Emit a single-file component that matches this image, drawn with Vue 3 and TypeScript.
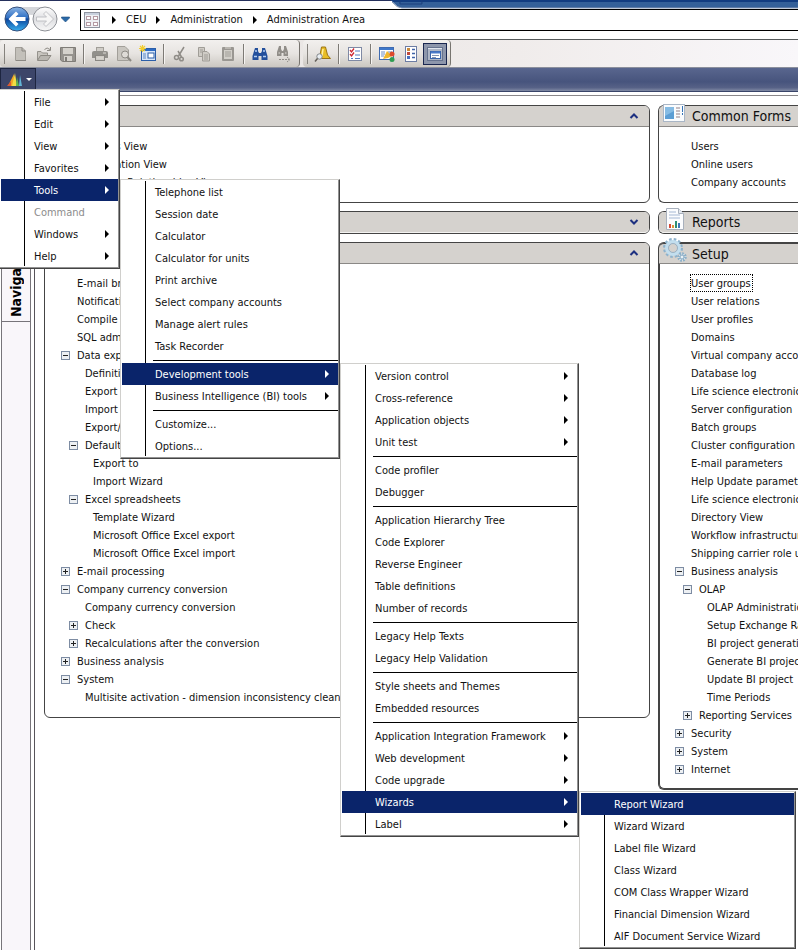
<script setup lang="ts">
interface MenuItem { label: string; sub?: boolean; open?: boolean; disabled?: boolean; sep?: boolean }
interface Menu { name: string; width: number; items: MenuItem[] }
interface Row { label: string; level: number; state?: 'open' | 'closed'; focus?: boolean }

const ITEM_HEIGHT = 22
const SEPARATOR_HEIGHT = 6
const FRAME = 2

const sep: MenuItem = { label: '', sep: true }
const item = (label: string): MenuItem => ({ label })
const sub = (label: string): MenuItem => ({ label, sub: true })
const open = (label: string): MenuItem => ({ label, sub: true, open: true })

const menus: Menu[] = [
  {
    name: 'Main', width: 121,
    items: [sub('File'), sub('Edit'), sub('View'), sub('Favorites'), open('Tools'),
      { label: 'Command', disabled: true }, sub('Windows'), sub('Help')],
  },
  {
    name: 'Tools', width: 220,
    items: [item('Telephone list'), item('Session date'), item('Calculator'), item('Calculator for units'),
      item('Print archive'), item('Select company accounts'), item('Manage alert rules'), item('Task Recorder'),
      sep, open('Development tools'), sub('Business Intelligence (BI) tools'), sep, item('Customize...'), item('Options...')],
  },
  {
    name: 'Development tools', width: 239,
    items: [sub('Version control'), sub('Cross-reference'), sub('Application objects'), sub('Unit test'), sep,
      item('Code profiler'), item('Debugger'), sep,
      item('Application Hierarchy Tree'), item('Code Explorer'), item('Reverse Engineer'), item('Table definitions'), item('Number of records'), sep,
      item('Legacy Help Texts'), item('Legacy Help Validation'), sep,
      item('Style sheets and Themes'), item('Embedded resources'), sep,
      sub('Application Integration Framework'), sub('Web development'), sub('Code upgrade'), open('Wizards'), sub('Label')],
  },
  {
    name: 'Wizards', width: 217,
    items: [{ label: 'Report Wizard', open: true }, item('Wizard Wizard'), item('Label file Wizard'), item('Class Wizard'),
      item('COM Class Wrapper Wizard'), item('Financial Dimension Wizard'), item('AIF Document Service Wizard')],
  },
]

// Each cascade starts at the right edge of its parent, level with the open item.
function place(list: Menu[]) {
  let left = -1
  let top = 0
  return list.map((menu) => {
    const placed = { ...menu, style: { left: `${left}px`, top: `${top}px`, width: `${menu.width}px` } }
    left += menu.width
    top += FRAME
    for (const entry of menu.items) {
      if (entry.open) break
      top += entry.sep ? SEPARATOR_HEIGHT : ITEM_HEIGHT
    }
    return placed
  })
}
const cascade = place(menus)

const row = (level: number, label: string, state?: 'open' | 'closed'): Row => ({ level, label, state })

const places: Row[] = [row(0, 'Business View'), row(0, 'Organization View'), row(0, 'Database Relationships View')]

const periodic: Row[] = [
  row(0, 'E-mail broadcast'), row(0, 'Notification'), row(0, 'Compile a'), row(0, 'SQL admin'),
  row(0, 'Data export', 'open'), row(1, 'Definition'), row(1, 'Export'), row(1, 'Import'), row(1, 'Export/'),
  row(1, 'Default', 'open'), row(2, 'Export to'), row(2, 'Import Wizard'),
  row(1, 'Excel spreadsheets', 'open'), row(2, 'Template Wizard'), row(2, 'Microsoft Office Excel export'), row(2, 'Microsoft Office Excel import'),
  row(0, 'E-mail processing', 'closed'), row(0, 'Company currency conversion', 'open'), row(1, 'Company currency conversion'),
  row(1, 'Check', 'closed'), row(1, 'Recalculations after the conversion', 'closed'),
  row(0, 'Business analysis', 'closed'), row(0, 'System', 'open'), row(1, 'Multisite activation - dimension inconsistency clean up'),
]

const forms: Row[] = [row(0, 'Users'), row(0, 'Online users'), row(0, 'Company accounts')]

const setup: Row[] = [
  { level: 0, label: 'User groups', focus: true }, row(0, 'User relations'), row(0, 'User profiles'), row(0, 'Domains'),
  row(0, 'Virtual company accounts'), row(0, 'Database log'), row(0, 'Life science electronic'), row(0, 'Server configuration'),
  row(0, 'Batch groups'), row(0, 'Cluster configuration'), row(0, 'E-mail parameters'), row(0, 'Help Update parameters'),
  row(0, 'Life science electronic'), row(0, 'Directory View'), row(0, 'Workflow infrastructure'), row(0, 'Shipping carrier role user'),
  row(0, 'Business analysis', 'open'), row(1, 'OLAP', 'open'),
  row(2, 'OLAP Administration'), row(2, 'Setup Exchange Rates'), row(2, 'BI project generation'), row(2, 'Generate BI project'),
  row(2, 'Update BI project'), row(2, 'Time Periods'), row(1, 'Reporting Services', 'closed'),
  row(0, 'Security', 'closed'), row(0, 'System', 'closed'), row(0, 'Internet', 'closed'),
]

const leftPanels = [
  { id: 'places', rows: places, collapsed: false },
  { id: 'inquiries', rows: [] as Row[], collapsed: true },
  { id: 'periodic', rows: periodic, collapsed: false },
]
const rightPanels = [
  { id: 'forms', title: 'Common Forms', rows: forms },
  { id: 'reports', title: 'Reports', rows: [] as Row[] },
  { id: 'setup', title: 'Setup', rows: setup },
]
const crumbs = ['CEU', 'Administration', 'Administration Area']
</script>

<template>
  <div class="app">
    <div class="titlebar">
      <svg class="title-shape" viewBox="0 0 408 9" preserveAspectRatio="none" aria-hidden="true">
        <path d="M0 0H408V8H10Q6 7 0 0Z" fill="#346099" />
        <path d="M0 0H408V2H2Z" fill="#123c80" />
        <path d="M1 2Q6 8 11 8H408" fill="none" stroke="#8798b4" />
        <path d="M9 0V4H31V0" fill="none" stroke="#1b3f7c" />
      </svg>
    </div>
    <header class="address-row">
      <div class="history">
        <svg class="nav-disc" viewBox="0 0 70 28" aria-hidden="true">
          <defs>
            <linearGradient id="blue" x1="0" y1="0" x2="0" y2="1">
              <stop offset="0" stop-color="#8ab4e4" /><stop offset=".45" stop-color="#2f6fc4" />
              <stop offset=".5" stop-color="#0c459c" /><stop offset="1" stop-color="#38b0f0" />
            </linearGradient>
            <linearGradient id="pale" x1="0" y1="0" x2="0" y2="1">
              <stop offset="0" stop-color="#ffffff" /><stop offset=".5" stop-color="#dedfe2" /><stop offset="1" stop-color="#f8f8f8" />
            </linearGradient>
          </defs>
          <path d="M16 2H46L40 8Q31 12 24 8Z" fill="#d4d6da" />
          <circle cx="17" cy="14" r="12" fill="url(#blue)" stroke="#36507c" />
          <path d="M8.500 14L16 6.500L18.500 9L15.500 12H25.500V16H15.500L18.500 19L16 21.500Z" fill="#fff" />
          <circle cx="45" cy="14" r="12" fill="url(#pale)" stroke="#8d9096" />
          <path d="M53.500 14L46 6.500L43.500 9L46.500 12H36.500V16H46.500L43.500 19L46 21.500Z" fill="#f6f6f6" stroke="#b6b8bd" stroke-width=".8" />
          <path d="M61.500 12H69.500V13L65.500 17L61.500 13Z" fill="#2a6aa8" stroke="#1d4b7e" stroke-width=".6" />
        </svg>
      </div>
      <nav class="address" aria-label="Address">
        <svg class="icon16" viewBox="0 0 16 16" aria-hidden="true">
          <rect x=".5" y=".5" width="15" height="15" fill="#eef0f4" stroke="#8f94a0" />
          <path d="M1 2H15" stroke="#a3b1c8" />
          <g fill="#fff" stroke="#b49aa4"><rect x="2.500" y="4.500" width="4" height="3" /><rect x="9.500" y="4.500" width="4" height="3" /><rect x="2.500" y="10.500" width="4" height="3" /><rect x="9.500" y="10.500" width="4" height="3" /></g>
        </svg>
        <template v-for="crumb in crumbs" :key="crumb">
          <i class="arrow"></i>
          <a href="#">{{ crumb }}</a>
        </template>
      </nav>
    </header>

    <div class="toolbars">
      <div class="toolbar" role="toolbar" aria-label="Standard">
        <i class="grip"></i>
        <button type="button" aria-label="New"><svg viewBox="0 0 16 16"><path d="M3.500 1.500H10L13.500 5V14.500H3.500Z" fill="#c3c0ba" stroke="#a29f99" /><path d="M10 1.500V5H13.500M4 14.500H14" fill="none" stroke="#8a8782" /></svg></button>
        <button type="button" aria-label="Open"><svg viewBox="0 0 16 16"><path d="M1.500 14V5.500H5L6.500 7H11.500V9" fill="#c8c5bf" stroke="#95928c" /><path d="M1.500 14.500L4.500 9.500H15L11.500 14.500Z" fill="#b9b6b0" stroke="#8d8a84" /><path d="M8.500 3.500Q11 .5 14 3.500M14.500 1V4.500H11" fill="none" stroke="#8d8a84" /></svg></button>
        <button type="button" aria-label="Save"><svg viewBox="0 0 16 16"><path d="M.5 1.500H15.500V15.500H2.500L.5 14Z" fill="#96938e" stroke="#7f7c77" /><rect x="3" y="2" width="10" height="6" fill="#d5d2cc" /><rect x="4" y="10" width="8" height="5" fill="#d5d2cc" /><rect x="5" y="11" width="2" height="4" fill="#7f7c77" /></svg></button>
        <i class="divider"></i>
        <button type="button" aria-label="Print"><svg viewBox="0 0 16 16"><rect x="4.500" y="1.500" width="7" height="5" fill="#d0cdc7" stroke="#a19e98" /><path d="M0 7Q0 5 2 5H14Q16 5 16 7V12H0Z" fill="#92908b" /><rect x="3.500" y="9.500" width="9" height="5" fill="#cfccc6" stroke="#8a8782" /><path d="M5 12H11M11 7H14" stroke="#dedbd5" /></svg></button>
        <button type="button" aria-label="Print preview"><svg viewBox="0 0 16 16"><path d="M1.500 .5H9L12.500 4V14.500H1.500Z" fill="#c9c6c0" stroke="#a29f99" /><circle cx="9" cy="8.500" r="3.500" fill="#dedbd6" stroke="#8d8a84" /><path d="M11.500 11L15 15" stroke="#8d8a84" stroke-width="2" /></svg></button>
        <button type="button" aria-label="New window"><svg viewBox="0 0 16 16"><rect x="1.500" y="2.500" width="14" height="12" fill="#d8e6f8" stroke="#2b5ea8" /><rect x="2" y="3" width="13" height="2" fill="#2c6bc4" /><path d="M3 8H6M3 10H6M3 12H6" stroke="#5d86c0" /><rect x="8" y="7" width="6" height="5" fill="#fff" stroke="#2b5ea8" /><path d="M2.500 -1V6M-1 2.500H6M0 0L5 5M5 0L0 5" stroke="#f2cd2e" stroke-width="1.200" /></svg></button>
        <i class="divider"></i>
        <button type="button" aria-label="Cut"><svg viewBox="0 0 16 16"><path d="M12 1L6.500 10M6 5L9.500 11" stroke="#8f8c87" stroke-width="1.500" /><circle cx="4.500" cy="11.500" r="2" fill="none" stroke="#8f8c87" stroke-width="1.500" /><circle cx="9.500" cy="13" r="1.800" fill="none" stroke="#8f8c87" stroke-width="1.500" /></svg></button>
        <button type="button" aria-label="Copy"><svg viewBox="0 0 16 16"><g fill="#cfccc6" stroke="#a09d97"><path d="M2.500 1.500H8.500V10.500H2.500Z" /><path d="M6.500 5.500H11L13.500 8V15H6.500Z" /></g><path d="M4 4H7M4 6H6M8 9H12M8 11H12M8 13H12" stroke="#a09d97" /></svg></button>
        <button type="button" aria-label="Paste"><svg viewBox="0 0 16 16"><rect x="2" y="1" width="12" height="14" rx="1" fill="#9a9792" /><rect x="4" y="4" width="8" height="9" fill="#d2cfc9" /><path d="M5 1H11V3H5Z" fill="#b9b6b0" /><path d="M5 6H11M5 8H11M5 10H11" stroke="#a09d97" /></svg></button>
        <i class="divider"></i>
        <button type="button" aria-label="Find"><svg viewBox="0 0 16 16"><path d="M3 2H6V5L7 7H9L10 5V2H13L15.500 10V14H9.500V10H6.500V14H.5V10Z" fill="#24509c" /><path d="M4 4V6M12 4V6M2 10.500H5M11 10.500H14" stroke="#b5d0f2" stroke-width="1.500" /></svg></button>
        <button type="button" aria-label="Find next"><svg viewBox="0 0 16 16"><path d="M3 0H5V3L6 5H7L8 3V0H10L12 6V10H7.500V7H5.500V10H1V6Z" fill="#918e89" /><path d="M2.500 7H4M9 7H10.500" stroke="#dedbd6" /><path d="M3 13.500H13M11 11L14 13.500L11 16" fill="none" stroke="#918e89" stroke-dasharray="2 1" /></svg></button>
      </div>
      <div class="toolbar" role="toolbar" aria-label="Form">
        <i class="grip"></i>
        <button type="button" aria-label="Alert"><svg viewBox="0 0 16 16"><path d="M6.500 1H10.500L12.500 9L15.500 12.500H2.500L5 9Z" fill="#e8bd25" stroke="#9b7413" /><path d="M8 3L7 10" stroke="#fff0a0" stroke-width="1.500" /><circle cx="4.500" cy="10.500" r="2.700" fill="#e9eef2" stroke="#83878c" /><path d="M2.500 12.500L0 15.500" stroke="#65605a" stroke-width="1.500" /></svg></button>
        <i class="divider"></i>
        <button type="button" aria-label="Tasks"><svg viewBox="0 0 16 16"><rect x="1.500" y="1.500" width="13" height="13" fill="#fff" stroke="#7f89a4" /><path d="M8 5H13M8 9H13M8 12.500H13" stroke="#587cc0" /><path d="M3 4L4.500 6L7 2.500M3 8L4.500 10L7 6.500" fill="none" stroke="#cf2630" stroke-width="1.300" /><path d="M4 12H6V13H4Z" fill="#587cc0" /></svg></button>
        <i class="divider"></i>
        <button type="button" aria-label="Design"><svg viewBox="0 0 16 16"><rect x=".5" y="1.500" width="14" height="12" fill="#fff" stroke="#406bb0" /><path d="M1 3H14" stroke="#3f78ca" stroke-width="2" /><path d="M2 6H6M2 8H6M2 10H5M9 6H13" stroke="#6c8fc6" /><path d="M8 5L13 10L9 12L4 13Z" fill="#efb72e" /><circle cx="13" cy="8" r="2.500" fill="#dd4a2c" /><circle cx="13" cy="13.500" r="2.500" fill="#2f9d52" /></svg></button>
        <button type="button" aria-label="Properties"><svg viewBox="0 0 16 16"><rect x="2.500" y=".5" width="11" height="15" fill="#fff" stroke="#6c7da4" /><rect x="4" y="2" width="3" height="3" fill="#c98b3a" /><rect x="4" y="6" width="3" height="3" fill="#c14b3e" /><rect x="4" y="10" width="3" height="3" fill="#496fbe" /><path d="M9 3.500H12M9 7.500H12M9 11.500H12" stroke="#3f63a8" stroke-width="1.500" /></svg></button>
        <button type="button" class="pressed" aria-label="Area page" aria-pressed="true"><svg viewBox="0 0 16 16"><rect x=".5" y="1.500" width="15" height="13" fill="#aeb6c6" stroke="#66738f" /><path d="M1 2.500H15" stroke="#e1e6ee" stroke-width="1" /><rect x="3.500" y="5.500" width="10" height="7" fill="#fff" stroke="#3b65ab" /><path d="M4 6.500H13" stroke="#4a7aca" stroke-width="2" /><path d="M5 9.500H12M5 11.500H9" stroke="#8293b4" /></svg></button>
      </div>
    </div>

    <div class="menubar">
      <button type="button" class="logo" aria-label="Main menu" aria-expanded="true">
        <svg class="icon16" viewBox="0 0 16 16" aria-hidden="true">
          <path d="M1 14L7 2V14Z" fill="#f0a526" /><path d="M0 14L4 9V14Z" fill="#db5a33" /><path d="M5 14L8 1L10 14Z" fill="#f1dd45" />
          <path d="M9 14L10 5L12 14Z" fill="#5bb64d" /><path d="M12 14L13 3L15 14Z" fill="#62b5d8" />
        </svg>
        <i class="drop"></i>
      </button>
      <div class="menus">
        <ul v-for="menu in cascade" :key="menu.name" class="menu" role="menu" :aria-label="menu.name" :style="menu.style">
          <li v-for="(entry, i) in menu.items" :key="i" :role="entry.sep ? 'separator' : 'none'" :class="{ separator: entry.sep }">
            <button v-if="!entry.sep" type="button" role="menuitem" class="menu-item" :class="{ open: entry.open }" :disabled="entry.disabled">
              <span>{{ entry.label }}</span>
              <i v-if="entry.sub" class="arrow"></i>
            </button>
          </li>
        </ul>
      </div>
    </div>

    <div class="workspace">
      <aside class="side">
        <button type="button" class="side-tab"><span>Navigation</span></button>
      </aside>
      <main class="content">
        <div class="column wide">
          <section v-for="panel in leftPanels" :key="panel.id" class="panel">
            <div class="panel-head">
              <button type="button" class="toggle" :aria-label="panel.collapsed ? 'Expand' : 'Collapse'">
                <svg viewBox="0 0 8 6" :class="{ down: panel.collapsed }"><path d="M.5 5L4 1.500L7.500 5" fill="none" stroke="#1c2f80" stroke-width="2" /></svg>
              </button>
            </div>
            <ul v-if="panel.rows.length" class="rows">
              <li v-for="(r, i) in panel.rows" :key="i" class="row" :class="'level' + r.level">
                <button v-if="r.state" type="button" class="box" :class="r.state" :aria-label="r.state === 'open' ? 'Collapse' : 'Expand'"></button>
                <i v-else class="no-box"></i>
                <a href="#">{{ r.label }}</a>
              </li>
            </ul>
          </section>
        </div>
        <div class="column narrow">
          <section v-for="panel in rightPanels" :key="panel.id" class="panel cut" :class="{ active: panel.id === 'setup' }">
            <div class="panel-head">
              <svg v-if="panel.id === 'forms'" class="panel-icon" viewBox="0 0 24 24" aria-hidden="true">
                <rect x=".5" y="2.500" width="21" height="17" fill="#fafcfe" stroke="#a9b6c6" />
                <rect x="2" y="5" width="9" height="12" fill="#5c9ed4" /><path d="M2 5H11V9L2 14Z" fill="#86bce4" />
                <path d="M13 6H17M13 9H17M13 12H17M13 15H17" stroke="#b5a9ae" stroke-width="1.500" /><path d="M19.500 4V13" stroke="#3574b8" stroke-dasharray="6 1" />
              </svg>
              <svg v-else-if="panel.id === 'reports'" class="panel-icon" viewBox="0 0 24 24" aria-hidden="true">
                <path d="M3.500 .5H15.500L20.500 5.500V21.500H3.500Z" fill="#fbfcfe" stroke="#a8b0bc" /><path d="M15.500 .5V5.500H20.500" fill="#e2e7ef" stroke="#a8b0bc" />
                <path d="M6 4H13M6 7H17M6 10H17" stroke="#a5b8d4" />
                <path d="M7 20V16" stroke="#d84838" stroke-width="2" /><path d="M10 20V17" stroke="#e09638" stroke-width="2" /><path d="M13 20V13" stroke="#2e8f74" stroke-width="2" /><path d="M16 20V15" stroke="#3c78b8" stroke-width="2" />
              </svg>
              <svg v-else class="panel-icon" viewBox="0 0 24 24" aria-hidden="true">
                <circle cx="10" cy="9" r="8.500" fill="none" stroke="#8eb2cc" stroke-width="3" stroke-dasharray="2.500 2" />
                <circle cx="10" cy="9" r="6.500" fill="#d5d2ce" stroke="#c2deee" stroke-width="3" /><circle cx="10" cy="9" r="4.500" fill="none" stroke="#7ea4c2" stroke-width=".7" />
                <circle cx="19" cy="18" r="3.500" fill="#f0f5f8" stroke="#8db0c8" stroke-width="2.500" stroke-dasharray="1.700 1" /><circle cx="19" cy="18" r="2" fill="#e9f1f6" stroke="#83a6bf" />
              </svg>
              <h2>{{ panel.title }}</h2>
            </div>
            <ul v-if="panel.rows.length" class="rows">
              <li v-for="(r, i) in panel.rows" :key="i" class="row" :class="'level' + r.level">
                <button v-if="r.state" type="button" class="box" :class="r.state" :aria-label="r.state === 'open' ? 'Collapse' : 'Expand'"></button>
                <i v-else class="no-box"></i>
                <a href="#" :class="{ focus: r.focus }">{{ r.label }}</a>
              </li>
            </ul>
          </section>
        </div>
      </main>
    </div>
  </div>
</template>

<style>
body { margin: 0; background: #fff; overflow: hidden; }
</style>

<style scoped>
.app {
  display: flex; flex-direction: column; min-height: 100vh; overflow: hidden;
  font: 11px/18px "DejaVu Sans Condensed", "DejaVu Sans", sans-serif; color: #111;
}
* { box-sizing: border-box; }
button { font: inherit; color: inherit; padding: 0; margin: 0; border: 0; background: none; }
a { color: inherit; text-decoration: none; white-space: nowrap; }
ul { list-style: none; margin: 0; padding: 0; }
h2 { margin: 0; }
svg { display: block; overflow: visible; }
.icon16 { width: 16px; height: 16px; flex: none; }

.titlebar { height: 9px; display: flex; justify-content: flex-end; border-top: 1px solid #25305c; }
.title-shape { width: 51%; height: 9px; margin-top: -1px; }
.address-row { display: flex; height: 30px; align-items: flex-start; }
.history { width: 80px; flex: none; }
.nav-disc { width: 70px; height: 28px; margin-top: -4px; }
.address { flex: 1; display: flex; align-items: center; gap: 10px; height: 22px; padding-left: 3px; border: 1px solid #000; border-right: 0; }
.address .icon16 { margin-right: 2px; }
.arrow { flex: none; width: 0; height: 0; border: 4px solid transparent; border-left-color: #000; border-right-width: 0; }

.toolbars { display: flex; height: 28px; border-top: 1px solid #55595a; background: linear-gradient(90deg, #e2dfdc, #f0eceb 65%, #f9f7fa); }
.toolbar { display: flex; align-items: center; height: 27px; padding: 0 3px 0 4px; margin-right: 3px; border-right: 1px solid #77746f; border-radius: 4px; background: linear-gradient(#f2f0ee, #e7e4e1 50%, #cbc7c1); }
.toolbar button { width: 24px; height: 22px; display: flex; align-items: center; justify-content: center; }
.toolbar svg { width: 16px; height: 16px; }
.toolbar .pressed { border: 1px solid #1a2750; background: #8d96ab; }
.grip { width: 1px; height: 20px; margin-right: 3px; background: #85827d; }
.divider { width: 2px; height: 20px; margin: 0 3px; border-left: 1px solid #7d7a75; background: #f6f4f2; }

.menubar { position: relative; z-index: 2; height: 25px; border-top: 1px solid #8b8f9c; border-bottom: 1px solid #394469; background: linear-gradient(#59668e, #47547d 60%, #566186 85%, #8089a4); }
.logo { display: flex; align-items: center; gap: 3px; width: 36px; height: 23px; padding-left: 6px; border: 1px solid #1d2540; background: #3c4569; }
.drop { border: 3px solid transparent; border-top-color: #fff; border-bottom-width: 0; }
.menus { position: absolute; left: 0; top: 21px; }
.menu { position: absolute; padding: 1px; border: 1px solid #d0cfcc; border-right-color: #444; border-bottom-color: #444; box-shadow: inset -1px -1px #929292; background: linear-gradient(#000, #000) 24px 1px / 1px calc(100% - 3px) no-repeat #fff; }
.menu-item { display: flex; align-items: center; justify-content: space-between; width: 100%; height: 22px; padding: 0 9px 0 33px; white-space: nowrap; text-align: left; }
.menu-item span { padding-top: 2px; }
.menu-item:disabled { color: #8c8c8c; }
.menu-item.open { background: #0a246a; color: #fff; }
.menu-item.open .arrow { border-left-color: #fff; }
.separator { height: 6px; margin-left: 31px; background: linear-gradient(#000, #000) 0 3px / 100% 1px no-repeat; }

.workspace { flex: 1; display: flex; margin-top: 3px; border-top: 1px solid #8a878a; }
.side { flex: none; width: 30px; margin: 0 3px 0 1px; border: solid #77747a; border-width: 0 1px; background: #f9f6fa; }
.side-tab { display: flex; align-items: flex-end; justify-content: center; width: 28px; height: 226px; padding-bottom: 4px; border-bottom: 1px solid #77747a; font: bold 14px/20px "DejaVu Sans Condensed", "DejaVu Sans", sans-serif; color: #000; }
.side-tab span { writing-mode: vertical-rl; transform: rotate(180deg); }
.content { flex: 1; min-width: 0; display: flex; gap: 8px; padding: 9px 0 0 9px; border-left: 1px solid #57545a; }
.column { display: flex; flex-direction: column; gap: 8px; }
.wide { flex: 1; min-width: 0; }
.narrow { flex: none; width: 140px; }
.panel { position: relative; border: 1px solid #444; border-radius: 6px; background: #fff; }
.panel.cut { border-right: 0; border-radius: 6px 0 0 6px; }
.panel.active { box-shadow: inset 1px 0 #444, inset 0 -1px #444; }
.panel-head { display: flex; align-items: center; height: 21px; background: #d5d2ce; border-bottom: 1px solid #8a8886; border-radius: 5px 5px 0 0; }
.cut .panel-head { border-radius: 5px 0 0 0; padding-left: 33px; }
.active .panel-head { border-top: 1px solid #444; }
.panel-head:last-child { border-bottom-color: #f4f3f1; border-radius: 5px; }
.cut .panel-head:last-child { border-radius: 5px 0 0 5px; }
.panel-head h2 { font: 14px/20px "DejaVu Sans Condensed", "DejaVu Sans", sans-serif; white-space: nowrap; }
.panel-icon { position: absolute; left: 4px; top: -4px; width: 24px; height: 24px; }
.toggle { margin-left: auto; margin-right: 11px; }
.toggle svg { width: 8px; height: 6px; }
.toggle .down { transform: rotate(180deg); }
.rows { padding: 10px 0 11px; overflow: hidden; }
.row { display: flex; align-items: center; gap: 7px; height: 18px; padding-left: 16px; }
.row a { padding-top: 2px; line-height: 16px; }
.level1 { padding-left: 24px; }
.level2 { padding-left: 32px; }
.no-box { width: 9px; flex: none; }
.box { flex: none; width: 9px; height: 9px; border: 1px solid #7d8ca3; background: linear-gradient(#222, #222) center / 5px 1px no-repeat, #edf0f3; }
.box.closed { background: linear-gradient(#222, #222) center / 5px 1px no-repeat, linear-gradient(#222, #222) center / 1px 5px no-repeat, #edf0f3; }
.row .focus { outline: 1px dotted #000; line-height: 14px; padding-right: 1px; }
</style>
